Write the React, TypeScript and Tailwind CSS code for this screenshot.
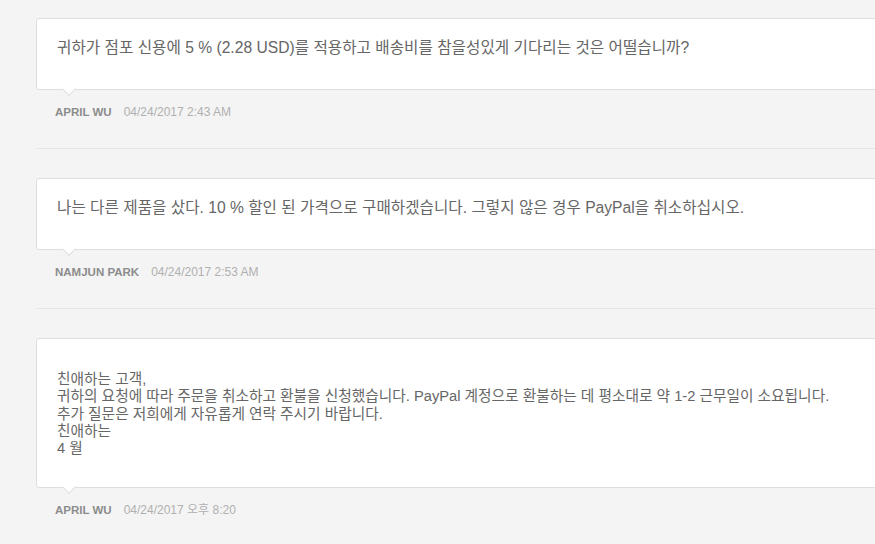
import React from "react";

type Item = {
  lines: string[];
  name: string;
  date: string;
  padClass: string;
  textClass: string;
};

const items: Item[] = [
  {
    lines: ["귀하가 점포 신용에 5 % (2.28 USD)를 적용하고 배송비를 참을성있게 기다리는 것은 어떨습니까?"],
    name: "APRIL WU",
    date: "04/24/2017 2:43 AM",
    padClass: "pt-[19px] pb-[32px]",
    textClass: "text-[15.65px] leading-[19px]",
  },
  {
    lines: ["나는 다른 제품을 샀다. 10 % 할인 된 가격으로 구매하겠습니다. 그렇지 않은 경우 PayPal을 취소하십시오."],
    name: "NAMJUN PARK",
    date: "04/24/2017 2:53 AM",
    padClass: "pt-[19px] pb-[32px]",
    textClass: "text-[15.65px] leading-[19px]",
  },
  {
    lines: [
      "친애하는 고객,",
      "귀하의 요청에 따라 주문을 취소하고 환불을 신청했습니다. PayPal 계정으로 환불하는 데 평소대로 약 1-2 근무일이 소요됩니다.",
      "추가 질문은 저희에게 자유롭게 연락 주시기 바랍니다.",
      "친애하는",
      "4 월",
    ],
    name: "APRIL WU",
    date: "04/24/2017 오후 8:20",
    padClass: "pt-[32px] pb-[30px]",
    textClass: "text-[14.7px] leading-[17.25px]",
  },
];

export default function App() {
  return (
    <div
      className="w-full h-[544px] overflow-hidden bg-[#f4f4f4]"
      style={{ fontFamily: '"Liberation Sans", Arial, "Noto Sans CJK KR", sans-serif' }}
    >
      <div className="w-[1000px] pl-[36px] pt-[18px]">
        {items.map((it, i) => (
          <div
            key={i}
            className={
              i < items.length - 1
                ? "pb-[28px] mb-[29px] border-b border-[#e6e6e6]"
                : "pb-[29px]"
            }
          >
            <div
              className={`relative bg-white border border-[#dedede] rounded-[3px] pl-[20px] pr-[20px] ${it.padClass}`}
            >
              <div className={`${it.textClass} text-[#666666]`}>
                {it.lines.map((l, j) => (
                  <div key={j} className="whitespace-nowrap">
                    {l}
                  </div>
                ))}
              </div>
              <div className="absolute left-[27px] -bottom-[5px] w-[10px] h-[10px] rotate-45 bg-white border-r border-b border-[#dedede]" />
            </div>
            <div className="mt-[14px] pl-[19px] flex items-center h-[16px] gap-[12px]">
              <span className="text-[11.5px] font-bold text-[#8c8c8c] leading-[16px]">{it.name}</span>
              <span className="text-[12px] text-[#b0b0b0] leading-[16px]">{it.date}</span>
            </div>
          </div>
        ))}
      </div>
    </div>
  );
}
